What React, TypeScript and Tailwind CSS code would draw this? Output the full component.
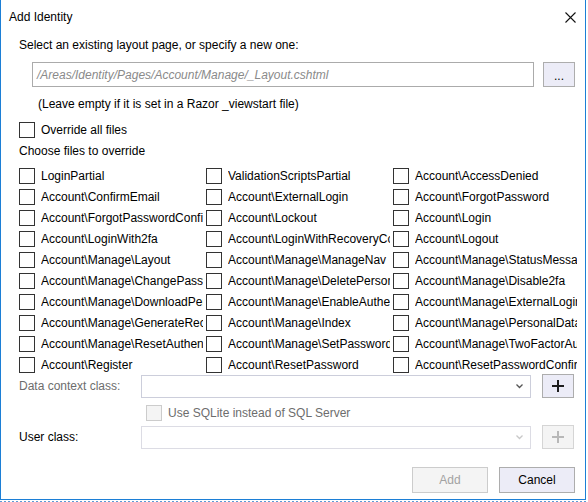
import React from "react";

const rows: [string, string, string][] = [
  ["LoginPartial", "ValidationScriptsPartial", "Account\\AccessDenied"],
  ["Account\\ConfirmEmail", "Account\\ExternalLogin", "Account\\ForgotPassword"],
  ["Account\\ForgotPasswordConfirmation", "Account\\Lockout", "Account\\Login"],
  ["Account\\LoginWith2fa", "Account\\LoginWithRecoveryCode", "Account\\Logout"],
  ["Account\\Manage\\Layout", "Account\\Manage\\ManageNav", "Account\\Manage\\StatusMessage"],
  ["Account\\Manage\\ChangePassword", "Account\\Manage\\DeletePersonalData", "Account\\Manage\\Disable2fa"],
  ["Account\\Manage\\DownloadPersonalData", "Account\\Manage\\EnableAuthenticator", "Account\\Manage\\ExternalLogins"],
  ["Account\\Manage\\GenerateRecoveryCodes", "Account\\Manage\\Index", "Account\\Manage\\PersonalData"],
  ["Account\\Manage\\ResetAuthenticator", "Account\\Manage\\SetPassword", "Account\\Manage\\TwoFactorAuthentication"],
  ["Account\\Register", "Account\\ResetPassword", "Account\\ResetPasswordConfirmation"],
];

function Box({ disabled }: { disabled?: boolean }) {
  return (
    <div
      className={
        disabled
          ? "w-[16px] h-[16px] shrink-0 border border-[#cccccc] bg-[#f4f4f4]"
          : "w-[16px] h-[16px] shrink-0 border border-[#333333] bg-white"
      }
    />
  );
}

function Chevron({ color }: { color: string }) {
  return (
    <svg width="7" height="5" viewBox="0 0 7 5">
      <path d="M0.5 0.5 L3.5 3.5 L6.5 0.5" stroke={color} strokeWidth="1.3" fill="none" />
    </svg>
  );
}

function Plus({ color }: { color: string }) {
  return (
    <svg width="12" height="12" viewBox="0 0 12 12">
      <path d="M6 0 V12 M0 6 H12" stroke={color} strokeWidth="2" />
    </svg>
  );
}

export default function App() {
  return (
    <div
      className="w-[588px] h-[502px] bg-white text-[12px] text-black relative overflow-hidden"
      style={{ fontFamily: '"Segoe UI", "Liberation Sans", Arial, sans-serif' }}
    >
      <div className="w-[586px] h-[500px] border-l border-r border-b border-[#1c7fd6] flex flex-col">
        <div className="h-[34px] flex items-center justify-between pl-[8px] pr-[9px]">
          <span className="leading-[16px]">Add Identity</span>
          <svg width="11" height="11" viewBox="0 0 11 11">
            <path d="M0.5 0.5 L10.5 10.5 M10.5 0.5 L0.5 10.5" stroke="#111" strokeWidth="1.1" />
          </svg>
        </div>
        <div className="pl-[18px] flex flex-col">
          <div className="mt-[3px] leading-[16px]">Select an existing layout page, or specify a new one:</div>
          <div className="mt-[9px] flex items-center gap-[9px] ml-[13px]">
            <div className="w-[502px] h-[25px] border border-[#ababab] flex items-center pl-[4px] italic text-[#8a8a8a]">
              /Areas/Identity/Pages/Account/Manage/_Layout.cshtml
            </div>
            <div className="w-[32px] h-[25px] border border-[#adadad] bg-[#ececf7] flex items-center justify-center leading-none pt-[3px]">
              ...
            </div>
          </div>
          <div className="mt-[9px] ml-[19px] leading-[16px]">(Leave empty if it is set in a Razor _viewstart file)</div>
          <div className="mt-[10px] flex items-center gap-[6px] h-[16px]">
            <Box />
            <span className="leading-[16px]">Override all files</span>
          </div>
          <div className="mt-[5px] leading-[16px]">Choose files to override</div>
          <div className="mt-[9px] flex flex-col gap-[5px]">
            {rows.map((r, i) => (
              <div key={i} className="flex h-[16px]">
                {r.map((t, j) => (
                  <div key={j} className="w-[187px] flex items-center gap-[6px]">
                    <Box />
                    <span className="w-[162px] overflow-hidden whitespace-nowrap leading-[16px]">{t}</span>
                  </div>
                ))}
              </div>
            ))}
          </div>
          <div className="mt-[1px] flex items-center h-[24px]">
            <span className="w-[122px] text-[#6d6d6d] leading-[16px]">Data context class:</span>
            <div className="w-[390px] h-[23px] border border-[#cccedb] flex items-center justify-end pr-[7px]">
              <Chevron color="#555" />
            </div>
            <div className="ml-[11px] w-[32px] h-[24px] border border-[#adadad] bg-[#ececf7] flex items-center justify-center">
              <Plus color="#1e1e1e" />
            </div>
          </div>
          <div className="mt-[7px] ml-[127px] flex items-center gap-[6px] h-[16px]">
            <Box disabled />
            <span className="text-[#6d6d6d] leading-[16px]">Use SQLite instead of SQL Server</span>
          </div>
          <div className="mt-[4px] flex items-center h-[24px]">
            <span className="w-[122px] leading-[16px]">User class:</span>
            <div className="w-[390px] h-[23px] border border-[#dcdce4] flex items-center justify-end pr-[7px]">
              <Chevron color="#c8c8c8" />
            </div>
            <div className="ml-[11px] w-[32px] h-[24px] border border-[#d5d5d5] bg-[#f4f4f4] flex items-center justify-center">
              <Plus color="#b8b8b8" />
            </div>
          </div>
          <div className="mt-[18px] flex justify-end gap-[11px] pr-[10px]">
            <div className="w-[76px] h-[26px] border border-[#cccccc] bg-[#f4f4f4] text-[#a2a2a2] flex items-center justify-center">
              Add
            </div>
            <div className="w-[76px] h-[26px] border border-[#adadad] bg-[#ececf7] flex items-center justify-center">
              Cancel
            </div>
          </div>
        </div>
      </div>
      <div className="absolute left-0 top-[501px] w-[588px] h-[1px] bg-[repeating-linear-gradient(90deg,#5c9ad6_0px,#5c9ad6_2px,transparent_2px,transparent_4px)]" />
    </div>
  );
}
